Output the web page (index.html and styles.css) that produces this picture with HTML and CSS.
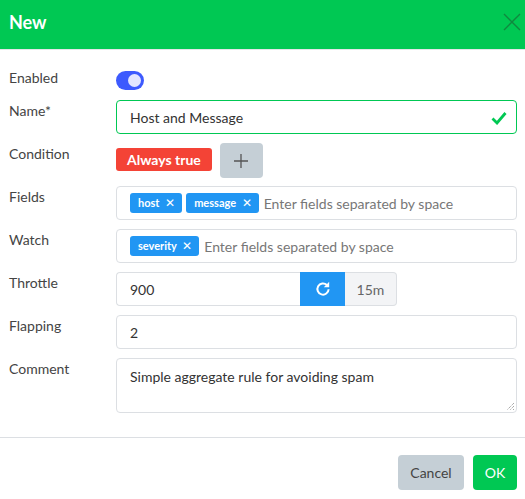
FILE: index.html
```html
<!DOCTYPE html>
<html>
<head>
<meta charset="utf-8">
<link rel="stylesheet" href="styles.css">
</head>
<body>
<div class="modal">
  <div class="header">
    <span class="title">New</span>
    <span class="close"><svg width="18" height="18" viewBox="0 0 18 18"><path d="M1 1L17 17M17 1L1 17" stroke="#10883f" stroke-width="1.4" fill="none"/></svg></span>
  </div>
  <div class="body">
    <div class="row row-short">
      <div class="label">Enabled</div>
      <div class="field"><span class="toggle"><span class="knob"></span></span></div>
    </div>
    <div class="row">
      <div class="label">Name*</div>
      <div class="field">
        <div class="input valid">Host and Message
          <svg class="check" width="16" height="14" viewBox="0 0 16 14"><path d="M1.5 7.5L6 12L14.5 2" stroke="#00c853" stroke-width="2.8" fill="none"/></svg>
        </div>
      </div>
    </div>
    <div class="row">
      <div class="label">Condition</div>
      <div class="field cond">
        <span class="badge">Always true</span>
        <span class="plus"><svg width="14" height="14" viewBox="0 0 14 14"><path d="M7 0V14M0 7H14" stroke="#555" stroke-width="1.3"/></svg></span>
      </div>
    </div>
    <div class="row">
      <div class="label">Fields</div>
      <div class="field">
        <div class="input tags">
          <span class="tag">host <span class="x">✕</span></span>
          <span class="tag">message <span class="x">✕</span></span>
          <span class="ph">Enter fields separated by space</span>
        </div>
      </div>
    </div>
    <div class="row">
      <div class="label">Watch</div>
      <div class="field">
        <div class="input tags">
          <span class="tag">severity <span class="x">✕</span></span>
          <span class="ph">Enter fields separated by space</span>
        </div>
      </div>
    </div>
    <div class="row">
      <div class="label">Throttle</div>
      <div class="field">
        <div class="group">
          <div class="input gi">900</div>
          <span class="refresh"><svg width="18" height="18" viewBox="0 0 18 18"><path d="M14.6 9.2A5.6 5.6 0 1 1 12.9 5" stroke="#fff" stroke-width="2" fill="none"/><path d="M15.2 1.8V7.2H9.8Z" fill="#fff"/></svg></span>
          <span class="addon">15m</span>
        </div>
      </div>
    </div>
    <div class="row">
      <div class="label">Flapping</div>
      <div class="field"><div class="input">2</div></div>
    </div>
    <div class="row">
      <div class="label">Comment</div>
      <div class="field"><div class="input textarea">Simple aggregate rule for avoiding spam
        <svg class="grip" width="8" height="8" viewBox="0 0 8 8"><path d="M8 1L1 8M8 4L4 8M8 7L7 8" stroke="#777" stroke-width="0.9" stroke-dasharray="1 1"/></svg>
      </div></div>
    </div>
  </div>
  <div class="footer">
    <span class="btn cancel">Cancel</span>
    <span class="btn ok">OK</span>
  </div>
</div>
</body>
</html>
```

FILE: styles.css
```css
html, body {
  margin: 0;
  padding: 0;
  background: #fff;
  font-family: Lato, "Noto Sans", sans-serif;
  font-size: 14px;
  color: #444;
}
.modal {
  width: 525px;
  height: 499px;
  overflow: hidden;
}
.header {
  height: 49px;
  background: #00c853;
  border-bottom: 1px solid #e3e6e9;
  display: flex;
  align-items: center;
  justify-content: space-between;
  padding: 0 4px 0 9px;
}
.title {
  color: #fff;
  font-weight: 700;
  font-size: 18px;
  margin-top: -5px;
}
.close {
  display: flex;
  margin-top: -6px;
  margin-right: 0;
}
.body {
  padding: 17px 8px 0 9px;
}
.row {
  display: flex;
  height: 34px;
  margin-bottom: 9px;
}
.row-short {
  height: 24px;
}
.label {
  width: 107px;
  flex: none;
  padding-top: 2px;
  line-height: 18px;
  font-size: 14px;
  color: #444;
}
.field {
  flex: 1;
  display: flex;
  align-items: flex-start;
}
.toggle {
  margin-top: 4px;
  width: 28px;
  height: 19px;
  border-radius: 10px;
  background: #3d5afe;
  position: relative;
}
.knob {
  position: absolute;
  right: 3px;
  top: 3px;
  width: 13px;
  height: 13px;
  border-radius: 50%;
  background: #e3e6ff;
}
.input {
  flex: 1;
  box-sizing: border-box;
  height: 34px;
  border: 1px solid #dcdfe3;
  border-radius: 4px;
  padding: 0 13px;
  display: flex;
  align-items: center;
  color: #333;
  font-size: 14px;
  position: relative;
}
.valid {
  border-color: #00c853;
}
.check {
  position: absolute;
  right: 9px;
  top: 10px;
}
.cond {
  gap: 8px;
  align-items: flex-start;
}
.badge {
  margin-top: 5px;
  background: #f44336;
  color: #fff;
  font-weight: 700;
  font-size: 14px;
  height: 23px;
  line-height: 23px;
  padding: 0 11px;
  border-radius: 3px;
}
.plus {
  width: 43px;
  height: 35px;
  background: #c5cfd6;
  border-radius: 4px;
  display: flex;
  align-items: center;
  justify-content: center;
}
.tags {
  gap: 4px;
}
.tag {
  background: #2196f3;
  color: #fff;
  font-weight: 700;
  font-size: 11px;
  height: 20px;
  line-height: 20px;
  padding: 0 7px 0 8px;
  border-radius: 3px;
  white-space: nowrap;
}
.tag .x {
  font-weight: 400;
  font-size: 11.5px;
  margin-left: 3px;
}
.ph {
  color: #777;
  font-size: 14px;
  white-space: nowrap;
  margin-left: 1px;
}
.group {
  display: flex;
  width: 281px;
  height: 34px;
}
.gi {
  border-radius: 4px 0 0 4px;
  border-right: none;
}
.refresh {
  width: 45px;
  height: 34px;
  background: #2196f3;
  display: flex;
  align-items: center;
  justify-content: center;
  flex: none;
}
.addon {
  width: 52px;
  box-sizing: border-box;
  height: 34px;
  background: #f3f4f6;
  border: 1px solid #dcdfe3;
  border-left: none;
  border-radius: 0 4px 4px 0;
  display: flex;
  align-items: center;
  justify-content: center;
  color: #666;
  flex: none;
}
.row:last-child {
  height: 55px;
  margin-bottom: 0;
}
.textarea {
  height: 55px;
  align-items: flex-start;
  padding-top: 9px;
}
.grip {
  position: absolute;
  right: 2px;
  bottom: 2px;
}
.footer {
  margin-top: 24px;
  border-top: 1px solid #dcdfe3;
  padding: 17px 8px 0 0;
  display: flex;
  justify-content: flex-end;
  gap: 9px;
}
.btn {
  height: 35px;
  line-height: 35px;
  border-radius: 4px;
  font-size: 14px;
  text-align: center;
  box-sizing: border-box;
}
.cancel {
  background: #c5cfd6;
  color: #444;
  width: 66px;
}
.ok {
  background: #00c853;
  color: #fff;
  width: 44px;
}
```
